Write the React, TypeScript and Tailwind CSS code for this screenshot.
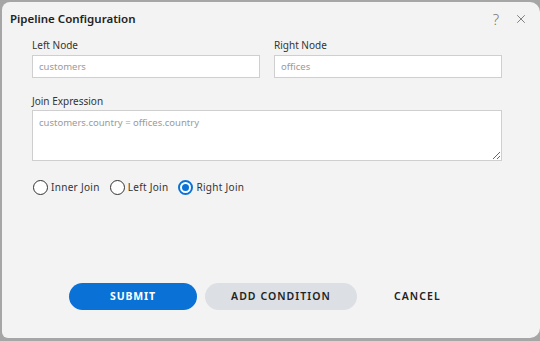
import { X } from "lucide-react";

const font = { fontFamily: '"Noto Sans", "Open Sans", sans-serif' };

function Radio({ label, checked }: { label: string; checked?: boolean }) {
  return (
    <label className="flex items-center gap-[3px] text-[10px] tracking-[0.03em] text-[#333]">
      {checked ? (
        <span className="flex h-[15px] w-[15px] items-center justify-center rounded-full border-[2px] border-[#0a72d6] bg-white">
          <span className="h-[7px] w-[7px] rounded-full bg-[#0a72d6]" />
        </span>
      ) : (
        <span className="h-[15px] w-[15px] rounded-full border border-[#333] bg-white" />
      )}
      <span>{label}</span>
    </label>
  );
}

export default function App() {
  return (
    <div className="h-[341px] w-[540px] bg-[#a6a6a6] pt-[2px] pb-[3px] pl-[2px]" style={font}>
      <div className="flex h-full flex-col rounded-tl-[8px] rounded-tr-[10px] rounded-bl-[6px] rounded-br-[10px] bg-[#f3f3f3]">
        {/* Header */}
        <div className="flex h-[34px] items-center justify-between pl-[8px] pr-[12px]">
          <p className="text-[11.5px] font-semibold text-[#222]">Pipeline Configuration</p>
          <div className="flex items-center gap-[15px] text-[#555]">
            <span className="text-[15px] font-light text-[#777]">?</span>
            <X size={14} strokeWidth={1.25} />
          </div>
        </div>

        {/* Form */}
        <div className="w-[470px] pl-[30px]" style={{ boxSizing: "content-box" }}>
          <div className="mt-[2px] grid grid-cols-2 gap-[14px]">
            <div>
              <p className="h-[14px] text-[10px] leading-[14px] text-[#333]">Left Node</p>
              <input
                readOnly
                placeholder="customers"
                className="mt-[3px] h-[23px] w-full border border-[#cfcfcf] bg-white px-[6px] text-[9.5px] text-[#333] placeholder:text-[#9a9a9a] outline-none"
              />
            </div>
            <div>
              <p className="h-[14px] text-[10px] leading-[14px] text-[#333]">Right Node</p>
              <input
                readOnly
                placeholder="offices"
                className="mt-[3px] h-[23px] w-full border border-[#cfcfcf] bg-white px-[6px] text-[9.5px] text-[#333] placeholder:text-[#9a9a9a] outline-none"
              />
            </div>
          </div>

          <p className="mt-[16px] h-[14px] text-[10px] leading-[14px] text-[#333]">Join Expression</p>
          <textarea
            readOnly
            placeholder="customers.country = offices.country"
            className="mt-[2px] block h-[51px] w-full resize border border-[#cfcfcf] bg-white px-[6px] py-[5px] text-[9.5px] text-[#333] placeholder:text-[#9a9a9a] outline-none"
          />

          <div className="mt-[19px] flex items-center gap-[10px] pl-[1px]">
            <Radio label="Inner Join" />
            <Radio label="Left Join" />
            <Radio label="Right Join" checked />
          </div>
        </div>

        {/* Actions */}
        <div className="mt-auto mb-[28px] flex items-center pl-[67px]">
          <button className="h-[27px] w-[128px] rounded-full bg-[#0a72d6] text-[10.5px] font-bold tracking-[0.08em] text-white">
            SUBMIT
          </button>
          <button className="ml-[8px] h-[27px] w-[152px] rounded-full bg-[#dcdfe3] text-[10.5px] font-semibold tracking-[0.1em] text-[#222]">
            ADD CONDITION
          </button>
          <button className="ml-[37px] h-[27px] text-[10.5px] font-semibold tracking-[0.1em] text-[#222]">
            CANCEL
          </button>
        </div>
      </div>
    </div>
  );
}
